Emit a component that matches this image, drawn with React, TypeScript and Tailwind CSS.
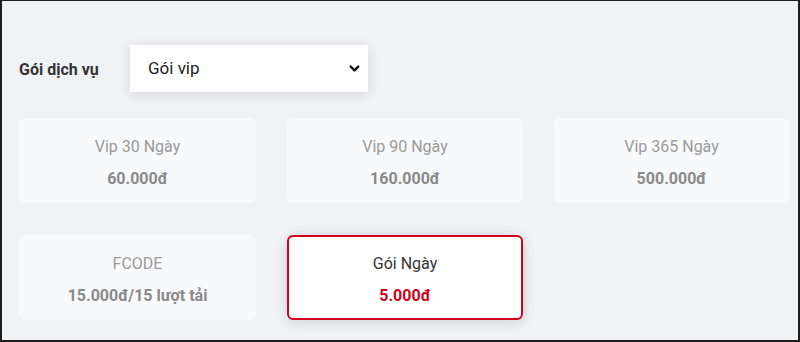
import { ChevronDown } from "lucide-react";

interface Plan {
  name: string;
  price: string;
  active?: boolean;
}

const plans: Plan[] = [
  { name: "Vip 30 Ngày", price: "60.000đ" },
  { name: "Vip 90 Ngày", price: "160.000đ" },
  { name: "Vip 365 Ngày", price: "500.000đ" },
  { name: "FCODE", price: "15.000đ/15 lượt tải" },
  { name: "Gói Ngày", price: "5.000đ", active: true },
];

const App = () => {
  return (
    <div
      className="w-[800px] h-[342px] bg-[#1e1e1e] pt-px px-[2px] pb-[2px]"
      style={{ fontFamily: "Roboto, 'Noto Sans', sans-serif" }}
    >
      <div className="h-full bg-[#f1f2f6] pl-[17px] pt-[44px] overflow-hidden">
        <div className="flex items-center">
          <span className="w-[111px] text-[16px] font-bold text-[#333333] pt-[2px]">
            Gói dịch vụ
          </span>
          <div className="w-[238px] h-[47px] bg-white shadow-[0_2px_12px_rgba(0,0,0,0.12)] flex items-center justify-between pl-[18px] pr-[6px]">
            <span className="text-[17px] text-[#222222]">Gói vip</span>
            <ChevronDown className="w-[15px] h-[15px] text-[#111111]" strokeWidth={4} />
          </div>
        </div>

        <div className="grid grid-cols-[237px_236px_235px] gap-x-[31px] gap-y-[32px] mt-[26px]">
          {plans.map((plan) => (
            <div
              key={plan.name}
              className={
                plan.active
                  ? "h-[85px] rounded-[6px] bg-white border-2 border-[#d0021b] shadow-[0_2px_14px_rgba(0,0,0,0.14)] flex flex-col items-center pt-[15px]"
                  : "h-[85px] rounded-[6px] bg-[#f8f9fb] flex flex-col items-center pt-[17px]"
              }
            >
              <span
                className={
                  plan.active
                    ? "text-[16px] text-[#333333]"
                    : "text-[16px] text-[#9a9a9a]"
                }
              >
                {plan.name}
              </span>
              <span
                className={
                  plan.active
                    ? "mt-[8px] text-[16px] font-bold text-[#d0021b]"
                    : "mt-[8px] text-[16px] font-bold text-[#8a8a8a]"
                }
              >
                {plan.price}
              </span>
            </div>
          ))}
        </div>
      </div>
    </div>
  );
};

export default App;
